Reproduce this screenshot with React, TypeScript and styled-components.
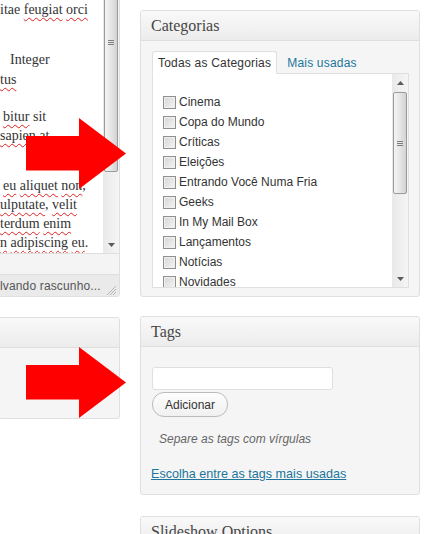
import React from "react";
import styled, { createGlobalStyle } from "styled-components";

const GlobalStyle = createGlobalStyle`
  html, body { margin: 0; padding: 0; background: #fff; overflow: hidden; }
  body { font-family: "Liberation Sans", Arial, sans-serif; font-size: 12px; color: #333; }
`;

const Page = styled.div`
  position: relative;
  display: flex;
  align-items: flex-start;
  width: 432px;
  height: 534px;
  overflow: hidden;
`;

/* ---------- left column: editor + a collapsed side box ---------- */

const LeftColumn = styled.div`
  display: flex;
  flex-direction: column;
  gap: 20px;
  width: 122px;
  margin-left: -2px;
  margin-top: -130px;
  flex-shrink: 0;
`;

const Editor = styled.div`
  border: 1px solid #dfdfdf;
  border-radius: 3px;
  background: #fff;
  overflow: hidden;
`;

const EditArea = styled.div`
  display: flex;
  height: 382px;
`;

const TextBody = styled.div`
  flex: 1;
  min-width: 0;
  padding: 129px 0 0 1px;
  overflow: hidden;
  font-family: "Liberation Serif", "Times New Roman", serif;
  font-size: 14px;
  color: #333;
`;

const Line = styled.div<{ $gap?: number; $indent?: number }>`
  height: 19px;
  line-height: 19px;
  white-space: nowrap;
  margin-top: ${(p) => p.$gap ?? 0}px;
  padding-left: ${(p) => p.$indent ?? 0}px;
`;

const Typo = styled.span`
  text-decoration: underline wavy #e02020;
  text-decoration-thickness: 1px;
  text-underline-offset: 3px;
  text-decoration-skip-ink: none;
`;

const PathBar = styled.div`
  height: 20px;
  border-top: 1px solid #dfdfdf;
  background: #f4f4f4;
`;

const StatusBar = styled.div`
  height: 21px;
  border-top: 1px solid #dfdfdf;
  background: #eaeaea;
  display: flex;
  align-items: center;
  padding-left: 1px;
  color: #555;
  font-size: 12px;
  white-space: nowrap;
`;

const StatusText = styled.span`
  flex: 1;
  overflow: hidden;
  letter-spacing: 0.15px;
`;

const ResizeGrip = styled.svg`
  width: 11px;
  height: 11px;
  margin: 9px 2px 0 4px;
  flex-shrink: 0;
`;

const SideBox = styled.div`
  border: 1px solid #dfdfdf;
  border-radius: 3px;
  background: #f5f5f5;
  overflow: hidden;
`;

/* ---------- scrollbars ---------- */

const ScrollBar = styled.div`
  width: 16px;
  flex-shrink: 0;
  display: flex;
  flex-direction: column;
  background: linear-gradient(to right, #e9e9e9, #f5f5f5);
`;

const ScrollButton = styled.div`
  height: 17px;
  flex-shrink: 0;
  display: flex;
  align-items: center;
  justify-content: center;
`;

const Track = styled.div`
  flex: 1;
  display: flex;
  flex-direction: column;
`;

const Thumb = styled.div<{ $offset: number; $size: number }>`
  margin: ${(p) => p.$offset}px 1px 0 1px;
  height: ${(p) => p.$size}px;
  border: 1px solid #9a9a9a;
  border-radius: 2px;
  box-sizing: border-box;
  background: linear-gradient(to right, #f4f4f4, #e4e4e4 55%, #d2d2d2);
  display: flex;
  align-items: center;
  justify-content: center;
`;

const Triangle = ({ up }: { up?: boolean }) => (
  <svg width="7" height="4" viewBox="0 0 7 4">
    <polygon points={up ? "0,4 7,4 3.5,0" : "0,0 7,0 3.5,4"} fill="#5a5a5a" />
  </svg>
);

const Grip = () => (
  <svg width="6" height="5" viewBox="0 0 6 5">
    <rect x="0" y="0" width="6" height="1" fill="#7d7d7d" />
    <rect x="0" y="2" width="6" height="1" fill="#7d7d7d" />
    <rect x="0" y="4" width="6" height="1" fill="#7d7d7d" />
  </svg>
);

const VScroll = ({ offset, size }: { offset: number; size: number }) => (
  <ScrollBar>
    <ScrollButton>
      <Triangle up />
    </ScrollButton>
    <Track>
      <Thumb $offset={offset} $size={size}>
        <Grip />
      </Thumb>
    </Track>
    <ScrollButton>
      <Triangle />
    </ScrollButton>
  </ScrollBar>
);

/* ---------- right column: meta boxes ---------- */

const RightColumn = styled.div`
  display: flex;
  flex-direction: column;
  width: 280px;
  margin-left: 20px;
  padding-top: 10px;
  flex-shrink: 0;
`;

const PostBox = styled.div<{ $space?: number }>`
  border: 1px solid #dfdfdf;
  border-radius: 3px;
  background: #f5f5f5;
  overflow: hidden;
  margin-bottom: ${(p) => p.$space ?? 0}px;
  flex-shrink: 0;
`;

const BoxHeader = styled.h3`
  margin: 0;
  height: 29px;
  padding: 0 10px;
  display: flex;
  align-items: center;
  border-bottom: 1px solid #dfdfdf;
  background: linear-gradient(to bottom, #f9f9f9, #ececec);
  font-family: "Liberation Serif", "Times New Roman", serif;
  font-size: 16px;
  font-weight: normal;
  color: #464646;
  white-space: nowrap;
`;

const SideBody = styled.div`
  height: 70px;
`;

const CategoryBody = styled.div`
  padding: 10px 10px 8px 11px;
`;

const Tabs = styled.div`
  display: flex;
  align-items: flex-end;
  height: 23px;
  margin-bottom: -1px;
  position: relative;
  z-index: 1;
`;

const Tab = styled.div<{ $active?: boolean }>`
  height: 21px;
  display: flex;
  align-items: center;
  padding: 0 ${(p) => (p.$active ? 5 : 0)}px;
  white-space: nowrap;
  border: 1px solid ${(p) => (p.$active ? "#dfdfdf" : "transparent")};
  border-bottom-color: ${(p) => (p.$active ? "#fff" : "transparent")};
  border-radius: 3px 3px 0 0;
  background: ${(p) => (p.$active ? "#fff" : "transparent")};
  color: ${(p) => (p.$active ? "#333" : "#21759b")};
  margin-left: ${(p) => (p.$active ? 0 : 9)}px;
  font-size: 12px;
  letter-spacing: 0.2px;
`;

const Panel = styled.div`
  height: 213px;
  display: flex;
  border: 1px solid #dfdfdf;
  background: #fff;
`;

const CheckList = styled.ul`
  flex: 1;
  margin: 0;
  padding: 18px 0 0 10px;
  list-style: none;
  overflow: hidden;
`;

const CheckItem = styled.li`
  height: 20px;
  display: flex;
  align-items: center;
  gap: 3px;
  white-space: nowrap;
  color: #333;
  font-size: 12px;
`;

const CheckBox = styled.span`
  width: 13px;
  height: 13px;
  box-sizing: border-box;
  flex-shrink: 0;
  border: 1px solid #8e8f8f;
  background: linear-gradient(135deg, #d6d6d6, #f4f4f4);
  box-shadow: inset 0 0 0 1px #f0f0f0;
`;

const TagsBody = styled.div`
  padding: 20px 10px 12px 11px;
  display: flex;
  flex-direction: column;
  align-items: flex-start;
`;

const TagInput = styled.input`
  width: 181px;
  height: 23px;
  box-sizing: border-box;
  border: 1px solid #dfdfdf;
  border-radius: 3px;
  background: #fff;
  margin: 0;
  padding: 0 4px;
  font: 12px "Liberation Sans", Arial, sans-serif;
  outline: none;
`;

const AddButton = styled.button`
  margin-top: 2px;
  width: 76px;
  height: 25px;
  box-sizing: border-box;
  border: 1px solid #bbb;
  border-radius: 12px;
  background: linear-gradient(to bottom, #fefefe, #f0f0f0);
  color: #333;
  font: 12px "Liberation Sans", Arial, sans-serif;
  padding: 0;
  cursor: pointer;
`;

const Hint = styled.p`
  margin: 15px 0 0 7px;
  font-style: italic;
  color: #666;
  font-size: 12px;
  line-height: 15px;
`;

const TagCloudLink = styled.a`
  margin: 20px 0 0 -1px;
  color: #21759b;
  text-decoration: underline;
  font-size: 12.6px;
  line-height: 15px;
  white-space: nowrap;
`;

const ArrowMark = styled.svg<{ $top: number }>`
  position: absolute;
  left: 26px;
  top: ${(p) => p.$top}px;
  width: 101px;
  height: 72px;
`;

const Arrow = ({ top }: { top: number }) => (
  <ArrowMark $top={top} viewBox="0 0 101 72">
    <polygon points="0,18 53,18 53,0 100,35.5 53,71 53,52.5 0,52.5" fill="#ff0000" />
  </ArrowMark>
);

const categories = [
  "Cinema",
  "Copa do Mundo",
  "Críticas",
  "Eleições",
  "Entrando Você Numa Fria",
  "Geeks",
  "In My Mail Box",
  "Lançamentos",
  "Notícias",
  "Novidades",
  "Resenhas",
];

export default function App() {
  return (
    <>
      <GlobalStyle />
      <Page>
        <LeftColumn>
          <Editor>
            <EditArea>
              <TextBody>
                <Line>
                  itae <Typo>feugiat</Typo> <Typo>orci</Typo>
                </Line>
                <Line $gap={31} $indent={10}>
                  Integer
                </Line>
                <Line $gap={1}>
                  <Typo>tus</Typo>
                </Line>
                <Line $gap={18} $indent={3}>
                  <Typo>bitur</Typo> sit
                </Line>
                <Line>
                  <Typo>sapien</Typo> <Typo>at</Typo>
                </Line>
                <Line $gap={31} $indent={3}>
                  <Typo>eu</Typo> <Typo>aliquet</Typo> <Typo>non</Typo>,
                </Line>
                <Line>
                  <Typo>ulputate</Typo>, <Typo>velit</Typo>
                </Line>
                <Line>
                  <Typo>terdum</Typo> <Typo>enim</Typo>
                </Line>
                <Line>
                  <Typo>n</Typo> <Typo>adipiscing</Typo> <Typo>eu</Typo>.
                </Line>
              </TextBody>
              <VScroll offset={24} size={260} />
            </EditArea>
            <PathBar />
            <StatusBar>
              <StatusText>lvando rascunho...</StatusText>
              <ResizeGrip viewBox="0 0 11 11">
                <path d="M10 1 L1 10 M10 4 L4 10 M10 7 L7 10" stroke="#b5b5b5" strokeWidth="1" />
              </ResizeGrip>
            </StatusBar>
          </Editor>
          <SideBox>
            <BoxHeader />
            <SideBody />
          </SideBox>
        </LeftColumn>

        <RightColumn>
          <PostBox $space={19}>
            <BoxHeader>Categorias</BoxHeader>
            <CategoryBody>
              <Tabs>
                <Tab $active>Todas as Categorias</Tab>
                <Tab>Mais usadas</Tab>
              </Tabs>
              <Panel>
                <CheckList>
                  {categories.map((c) => (
                    <CheckItem key={c}>
                      <CheckBox />
                      {c}
                    </CheckItem>
                  ))}
                </CheckList>
                <VScroll offset={1} size={102} />
              </Panel>
            </CategoryBody>
          </PostBox>

          <PostBox $space={21}>
            <BoxHeader>Tags</BoxHeader>
            <TagsBody>
              <TagInput type="text" />
              <AddButton type="button">Adicionar</AddButton>
              <Hint>Separe as tags com vírgulas</Hint>
              <TagCloudLink href="#">Escolha entre as tags mais usadas</TagCloudLink>
            </TagsBody>
          </PostBox>

          <PostBox>
            <BoxHeader>Slideshow Options</BoxHeader>
          </PostBox>
        </RightColumn>

        <Arrow top={118} />
        <Arrow top={347} />
      </Page>
    </>
  );
}
